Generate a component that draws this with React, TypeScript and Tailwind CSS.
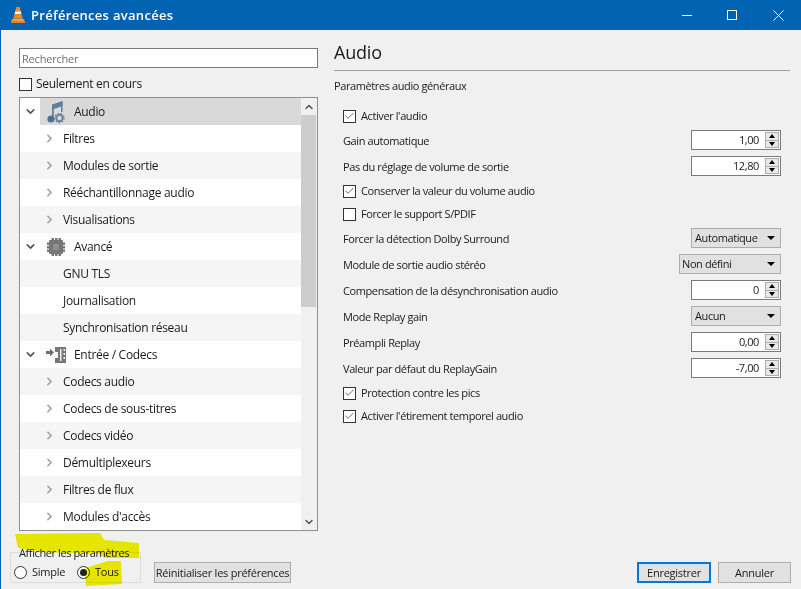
import React from "react";
import { ChevronDown, ChevronRight, ChevronUp, Check } from "lucide-react";

interface TreeRow {
  label: string;
  kind: "section" | "child" | "leaf";
  icon?: "audio" | "chip" | "codec";
}

const rows: TreeRow[] = [
  { label: "Audio", kind: "section", icon: "audio" },
  { label: "Filtres", kind: "child" },
  { label: "Modules de sortie", kind: "child" },
  { label: "Rééchantillonnage audio", kind: "child" },
  { label: "Visualisations", kind: "child" },
  { label: "Avancé", kind: "section", icon: "chip" },
  { label: "GNU TLS", kind: "leaf" },
  { label: "Journalisation", kind: "leaf" },
  { label: "Synchronisation réseau", kind: "leaf" },
  { label: "Entrée / Codecs", kind: "section", icon: "codec" },
  { label: "Codecs audio", kind: "child" },
  { label: "Codecs de sous-titres", kind: "child" },
  { label: "Codecs vidéo", kind: "child" },
  { label: "Démultiplexeurs", kind: "child" },
  { label: "Filtres de flux", kind: "child" },
  { label: "Modules d'accès", kind: "child" },
];

const ConeIcon = () => (
  <svg width="16" height="18" viewBox="0 0 16 18">
    <path d="M6.3 1h3.4l1 4H5.3z" fill="#f08a1d" />
    <path d="M5.2 5.2h5.6l.7 3H4.5z" fill="#f4f0ea" />
    <path d="M4.4 8.2h7.2l1 4H3.4z" fill="#f08a1d" />
    <path d="M1 15.5l2-3h10l2 3v1H1z" fill="#f6a04a" />
    <path d="M1 15h14v2H1z" fill="#ee7f16" />
  </svg>
);

const AudioIcon = () => (
  <svg width="18" height="24" viewBox="0 0 18 24">
    <path d="M5 4.5L15.5 1v5L6.800 9v10H5z" fill="#5f7f9f" />
    <path d="M14 1.500h1.500V12H14z" fill="#5f7f9f" />
    <circle cx="4" cy="19" r="3.600" fill="#4f7196" />
    <circle cx="12.500" cy="18" r="3.200" fill="none" stroke="#6d8299" strokeWidth="2" />
    <circle cx="12.500" cy="18" r="4.600" fill="none" stroke="#6d8299" strokeWidth="1.200" strokeDasharray="1.600 1.600" />
  </svg>
);

const ChipIcon = () => (
  <svg width="18" height="18" viewBox="0 0 18 18">
    <rect x="2" y="2" width="14" height="14" rx="1" fill="#777777" />
    <rect x="6" y="6" width="6" height="6" fill="#8f8f8f" />
    <path
      d="M4.500 0h2.500v2H4.500zM8 0h2.500v2H8zM11.500 0H14v2h-2.500zM4.500 16h2.500v2H4.500zM8 16h2.500v2H8zM11.500 16H14v2h-2.500zM0 4.500h2V7H0zM0 8h2v2.500H0zM0 11.500h2V14H0zM16 4.500h2V7h-2zM16 8h2v2.500h-2zM16 11.500h2V14h-2z"
      fill="#777777"
    />
  </svg>
);

const CodecIcon = () => (
  <svg width="22" height="18" viewBox="0 0 22 18">
    <path d="M1 5h4V2.500L9 6.500l-4 4V8H1z" fill="#6f6f6f" />
    <path d="M10 1h11v16H10V12h3V6h-3z" fill="#777777" />
    <path d="M15 3h1.500v12H15zM18.500 3H20v2h-1.500zM18.500 7H20v2h-1.500zM18.500 11H20v2h-1.500z" fill="#f0f0f0" />
  </svg>
);

const iconFor = (icon?: TreeRow["icon"]) => {
  if (icon === "audio") return <AudioIcon />;
  if (icon === "chip") return <ChipIcon />;
  if (icon === "codec") return <CodecIcon />;
  return null;
};

const Tree = () => (
  <div className="mt-[6px] flex h-[434px] w-full border border-[#8f8f8f] bg-white">
    <div className="w-[281px]">
      {rows.map((row, i) => {
        const alt = i % 2 === 0 ? "bg-[#f5f5f5]" : "bg-white";
        if (row.kind === "section") {
          return (
            <div key={row.label} className={`flex h-[27px] items-center ${i === 0 ? "bg-white" : alt}`}>
              <div className="flex w-5 justify-center">
                <ChevronDown size={13} strokeWidth={3} className="text-[#555555]" />
              </div>
              <div className={`flex h-full flex-1 items-center ${i === 0 ? "bg-[#d9d9d9]" : ""}`}>
                <div className="flex w-[34px] justify-center pr-[3px]">{iconFor(row.icon)}</div>
                <span>{row.label}</span>
              </div>
            </div>
          );
        }
        return (
          <div key={row.label} className={`flex h-[27px] items-center ${alt}`}>
            <div className="flex w-[43px] justify-end pr-[7px]">
              {row.kind === "child" && <ChevronRight size={13} strokeWidth={3} className="text-[#a0a0a0]" />}
            </div>
            <span>{row.label}</span>
          </div>
        );
      })}
    </div>
    <div className="flex flex-1 flex-col bg-[#f0f0f0]">
      <div className="flex h-[17px] items-center justify-center">
        <ChevronUp size={12} strokeWidth={3} className="text-[#555555]" />
      </div>
      <div className="h-[192px] w-[15px] bg-[#cdcdcd]" />
      <div className="flex-1" />
      <div className="flex h-[17px] items-center justify-center">
        <ChevronDown size={12} strokeWidth={3} className="text-[#555555]" />
      </div>
    </div>
  </div>
);

const CheckRow = ({ label, checked, className = "" }: { label: string; checked?: boolean; className?: string }) => (
  <div className={`flex h-4 items-center pl-[9px] ${className}`}>
    <div className="flex h-[13px] w-[13px] items-center justify-center border border-[#333333] bg-white">
      {checked && <Check size={12} strokeWidth={1.6} className="text-[#333333]" />}
    </div>
    <span className="ml-[5px]">{label}</span>
  </div>
);

const SpinRow = ({ label, value, className = "" }: { label: string; value: string; className?: string }) => (
  <div className={`flex h-5 items-center justify-between pl-[9px] pr-[9px] ${className}`}>
    <span className="pt-[2px]">{label}</span>
    <div className="flex h-5 w-[90px] items-center justify-end border border-[#7a7a7a] bg-white pr-[1px]">
      <span className="mr-[6px]">{value}</span>
      <div className="flex h-4 w-[14px] flex-col border border-[#adadad] bg-[#e8e8e8]">
        <div className="flex flex-1 items-center justify-center border-b border-[#adadad]">
          <div className="h-0 w-0 border-x-[3px] border-b-[4px] border-x-transparent border-b-black" />
        </div>
        <div className="flex flex-1 items-center justify-center">
          <div className="h-0 w-0 border-x-[3px] border-t-[4px] border-x-transparent border-t-black" />
        </div>
      </div>
    </div>
  </div>
);

const ComboRow = ({
  label,
  value,
  wide,
  className = "",
}: {
  label: string;
  value: string;
  wide?: boolean;
  className?: string;
}) => (
  <div className={`flex h-5 items-center justify-between pl-[9px] pr-[9px] ${className}`}>
    <span className="pt-[2px]">{label}</span>
    <div
      className={`flex h-5 items-center justify-between border border-[#adadad] bg-[#e1e1e1] pr-[5px] ${
        wide ? "w-[102px] pl-[2px]" : "w-[90px] pl-[3px]"
      }`}
    >
      <span>{value}</span>
      <div className="h-0 w-0 border-x-[4px] border-t-[4px] border-x-transparent border-t-black" />
    </div>
  </div>
);

const Radio = ({ label, selected, className = "" }: { label: string; selected?: boolean; className?: string }) => (
  <div className={`flex items-center ${className}`}>
    <div className="flex h-[13px] w-[13px] items-center justify-center rounded-full border border-[#333333] bg-white">
      {selected && <div className="h-[7px] w-[7px] rounded-full bg-[#222222]" />}
    </div>
    <span className="ml-[5px]">{label}</span>
  </div>
);

const Button = ({ children, className = "" }: { children: React.ReactNode; className?: string }) => (
  <div className={`flex h-[21px] items-center justify-center bg-[#e1e1e1] whitespace-nowrap ${className}`}>{children}</div>
);

export default function App() {
  return (
    <div
      className="relative flex h-[589px] w-[801px] flex-col overflow-hidden border-l border-[#0063b1] bg-[#f0f0f0] text-[12px] leading-[16px] tracking-[-0.3px] text-[#1a1a1a]"
      style={{ fontFamily: '"Open Sans", "Noto Sans", sans-serif' }}
    >
      {/* title bar */}
      <div className="flex h-[30px] items-center bg-[#0063b1] text-white">
        <div className="ml-[9px]">
          <ConeIcon />
        </div>
        <span className="ml-[5px] text-[13px] font-semibold tracking-[0.3px]">Préférences avancées</span>
        <div className="ml-auto flex items-center">
          <div className="mr-[35px] h-[1px] w-[10px] bg-white" />
          <div className="mr-[36px] h-[10px] w-[10px] border border-white" />
          <svg width="11" height="11" viewBox="0 0 11 11" className="mr-[17px]">
            <path d="M0.500 0.500l10 10M10.500 0.500l-10 10" stroke="white" strokeWidth="1" />
          </svg>
        </div>
      </div>

      <div className="flex flex-1">
        {/* left column */}
        <div className="ml-[18px] flex w-[299px] flex-col pt-[18px]">
          <div className="flex h-5 items-center border border-[#7a7a7a] bg-white pl-[2px] pt-[2px] text-[11px] tracking-[-0.2px] text-[#6f6f6f]">
            Rechercher
          </div>
          <div className="mt-[9px] flex h-[14px] items-center">
            <div className="h-[13px] w-[13px] border border-[#333333] bg-white" />
            <span className="ml-[4px]">Seulement en cours</span>
          </div>
          <Tree />
        </div>

        {/* right column */}
        <div className="ml-[16px] w-[456px] pt-[10px] text-[11px] tracking-[-0.4px]">
          <div className="border-b border-[#a0a0a0] pb-[5px] text-[18px] leading-[25px] tracking-[-0.2px]">Audio</div>
          <div className="mt-[7px]">Paramètres audio généraux</div>
          <CheckRow className="mt-[14px]" label="Activer l'audio" checked />
          <SpinRow className="mt-[6px]" label="Gain automatique" value="1,00" />
          <SpinRow className="mt-[6px]" label="Pas du réglage de volume de sortie" value="12,80" />
          <CheckRow className="mt-[7px]" label="Conserver la valeur du volume audio" checked />
          <CheckRow className="mt-[7px]" label="Forcer le support S/PDIF" />
          <ComboRow className="mt-[6px]" label="Forcer la détection Dolby Surround" value="Automatique" />
          <ComboRow className="mt-[6px]" label="Module de sortie audio stéréo" value="Non défini" wide />
          <SpinRow className="mt-[6px]" label="Compensation de la désynchronisation audio" value="0" />
          <ComboRow className="mt-[6px]" label="Mode Replay gain" value="Aucun" />
          <SpinRow className="mt-[6px]" label="Préampli Replay" value="0,00" />
          <SpinRow className="mt-[6px]" label="Valeur par défaut du ReplayGain" value="-7,00" />
          <CheckRow className="mt-[7px]" label="Protection contre les pics" checked />
          <CheckRow className="mt-[7px]" label="Activer l'étirement temporel audio" checked />
        </div>
      </div>

      {/* bottom row */}
      <div className="mb-[6px] flex items-end text-[11px] tracking-[-0.25px]">
        <div className="relative ml-[9px] h-[31px] w-[131px] border border-[#dcdcdc]">
          <div className="absolute left-[8px] top-[-7px] whitespace-nowrap bg-[#f0f0f0] leading-[14px] tracking-[-0.4px]">
            Afficher les paramètres
          </div>
          <div className="flex pl-[3px] pt-[11px]">
            <Radio className="w-[63px]" label="Simple" />
            <Radio label="Tous" selected />
          </div>
        </div>
        <Button className="ml-[13px] w-[137px] border border-[#adadad]">Réinitialiser les préférences</Button>
        <Button className="ml-auto w-[74px] border-2 border-[#0078d7]">Enregistrer</Button>
        <Button className="ml-[7px] mr-[10px] w-[73px] border border-[#adadad]">Annuler</Button>
      </div>

      {/* yellow marker strokes */}
      <svg
        width="801"
        height="589"
        viewBox="0 0 801 589"
        className="pointer-events-none absolute left-[-1px] top-0 mix-blend-multiply"
      >
        <path d="M15 534L100 533L104 540L139 543L139 558L105 558L100 554L40 552L18 548Z" fill="#f4f400" />
        <path d="M86 568L108 561L121 561L122 584L86 586L85 575Z" fill="#f4f400" />
      </svg>
    </div>
  );
}
